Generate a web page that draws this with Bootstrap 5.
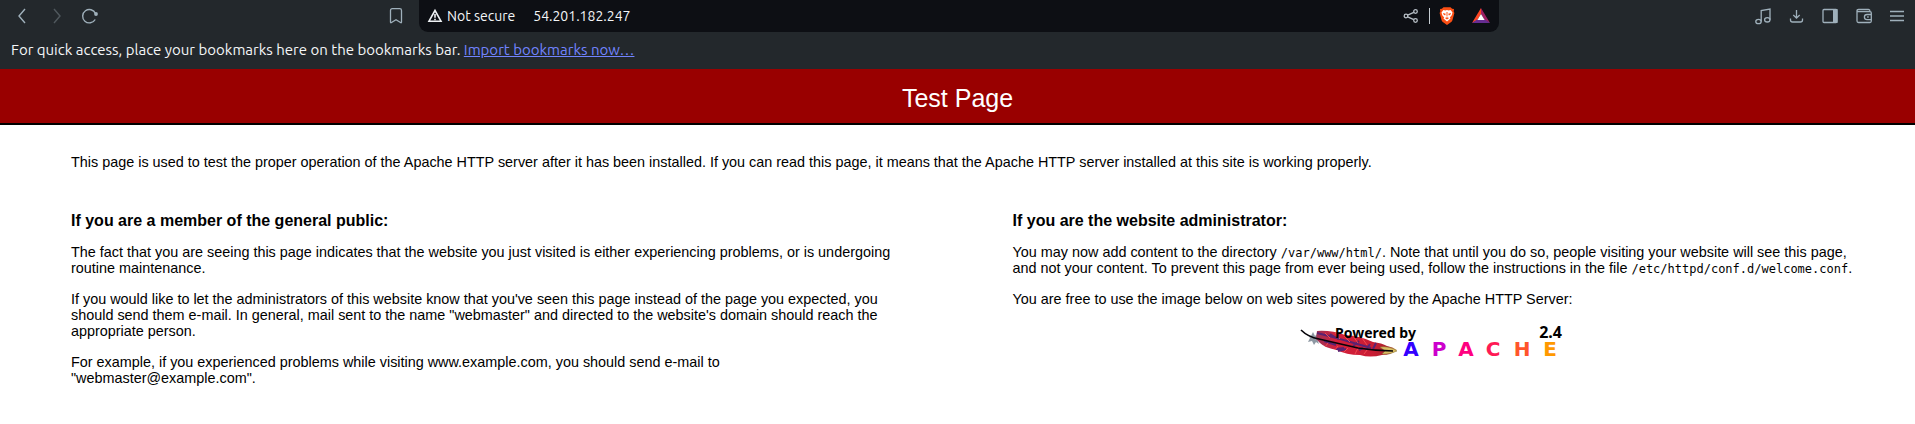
<!DOCTYPE html>
<html lang="en">
<head>
<meta charset="utf-8">
<meta name="viewport" content="width=device-width, initial-scale=1">
<title>Apache HTTP Server Test Page</title>
<link rel="stylesheet" href="https://cdn.jsdelivr.net/npm/bootstrap@5.3.0/dist/css/bootstrap.min.css">
<style>
  body { font-family: "Liberation Sans", Arial, sans-serif; font-size: 0.9rem; line-height: 16px; color: #000; background: #fff; }
  .browser-ui { background: #23282c; color: #f4f6f8; font-family: Ubuntu, "Noto Sans", sans-serif; font-size: 14px; }
  .toolbar { display: grid; grid-template-columns: 419px minmax(0, 1080px) 1fr; height: 32px; }
  .tool { width: 18px; height: 18px; padding: 0; border: 0; background: none; color: #9fb0bb; line-height: 0; }
  .tool:disabled { color: #50585e; }
  .address { background: #0d0f14; border-radius: 0 0 9px 9px; padding: 0 9px 0 8px; }
  .address input { background: none; border: 0; color: inherit; padding: 0 0 0 2px; outline: 0; min-width: 0; }
  .divider { width: 1px; height: 16px; background: #c5ccd2; }
  .bookmarks { height: 37px; padding: 0 11px 2px; font-size: 15px; }
  .bookmarks a { color: #7284ff; }
  .banner { background: #900; color: #fff; border-bottom: 2px solid #000; padding: 14px 0 10px; }
  .banner h1 { font-size: 25px; line-height: 30px; }
  .page-body { padding: 29px 62px 20px 71px; }
  .page-body p { margin-bottom: 15px; }
  .intro { padding-bottom: 27px; }
  .halves { column-gap: 104px; }
  .visitors { width: 47%; }
  .admins { flex: 1 1 0; }
  .halves h2 { font-size: 16px; line-height: 18px; font-weight: 700; margin-bottom: 14px; }
  .halves code { font-family: "DejaVu Sans Mono", monospace; font-size: 12px; line-height: 12px; color: inherit; }
  .powered { overflow: visible; }
</style>
</head>
<body>
<header class="browser-ui">
  <div class="toolbar">
    <div class="d-flex align-items-center ps-2 pe-3">
      <div class="d-flex align-items-center gap-3 ms-1">
        <button class="tool" aria-label="Back"><svg width="18" height="18" fill="none" stroke="currentColor" stroke-width="1.4"><path d="M13 2 7 9l6 7"/></svg></button>
        <button class="tool" aria-label="Forward" disabled><svg width="18" height="18" fill="none" stroke="currentColor" stroke-width="1.4"><path d="m8 2 6 7-6 7"/></svg></button>
        <button class="tool" aria-label="Reload"><svg width="18" height="18" fill="none" stroke="currentColor" stroke-width="1.4"><path d="M15.200 12.500A6.700 6.700 0 1 1 15.500 6.500"/><circle cx="16" cy="7" r="1.900" fill="currentColor" stroke="none"/></svg></button>
      </div>
      <button class="tool ms-auto" aria-label="Bookmark this page"><svg width="18" height="18" fill="none" stroke="currentColor" stroke-width="1.300"><path d="M5.500 3.500Q5.500 1.700 7.300 1.700h7.400q1.800 0 1.800 1.800V15q0 1.200-1 .5L11 12.700l-4.500 2.800q-1 .7-1-.5z"/></svg></button>
    </div>
    <div class="address d-flex align-items-center">
      <svg width="16" height="16" fill="none" stroke="#eef1f4" stroke-width="1.600"><path d="M8 2.500 14 13.200H2z"/><path d="M8 6v3.800M8 10.700v1.500"/></svg>
      <span class="ms-1">Not secure</span>
      <input class="flex-grow-1 ms-3" aria-label="Address" value="54.201.182.247">
      <button class="tool" aria-label="Share"><svg width="18" height="18" fill="none" stroke="#b6bec5" stroke-width="1.300"><circle cx="3" cy="9" r="1.800"/><circle cx="12.500" cy="4.500" r="1.800"/><circle cx="12.500" cy="13.500" r="1.800"/><path d="m4.700 8.200 6.100-2.900M4.700 9.800l6.100 2.900"/></svg></button>
      <span class="divider ms-2"></span>
      <button class="tool ms-2 me-3" aria-label="Brave Shields"><svg width="18" height="18" viewBox="0 0 18 18"><path fill="#fb4f14" d="M5.500.200h7l1.600 1.600 1.900.3-.3 2.300.7 1.600-2 7.200q-.3 1-1.200 1.700L9 18l-4.200-3.100q-.9-.7-1.200-1.700l-2-7.200.7-1.600L2 2.100l1.900-.3z"/><path fill="#fff" d="m5.400 3.100 2 .4L9 3.100l1.600.4 2-.4 1.900 2.500-.8 2.600-1.900 2.200.7 1.200L9 14.400l-3.500-2.800.7-1.200-1.900-2.200-.8-2.600z"/><path fill="#fb4f14" d="m5 6 2.800.7-.7 1.800-1.600-.9zm8 0-2.800.7.7 1.800 1.600-.9zM8.500 5h1l-.1 4.500h-.8zM6.900 11.100 9 10.200l2.100.9L9 12.500z"/></svg></button>
      <button class="tool" aria-label="Brave Rewards"><svg width="18" height="18"><path fill="#ff4724" d="M9 1v6l-3.800 6.200L0 16z"/><path fill="#9e1f63" d="M9 1l9 15-5.200-2.800L9 7z"/><path fill="#662d91" d="M0 16h18l-5-3.500H5z"/><path fill="#fff" d="m9 7 3.700 6H5.300z"/></svg></button>
    </div>
    <div class="d-flex align-items-center justify-content-end gap-3 pe-2">
      <button class="tool" aria-label="Playlist"><svg width="18" height="18" fill="none" stroke="currentColor" stroke-width="1.300"><ellipse cx="5.500" cy="14.500" rx="2.700" ry="2.200"/><ellipse cx="14.300" cy="12.800" rx="2.700" ry="2.200"/><path d="M8.200 14.500V3.500L17 2v10.800"/></svg></button>
      <button class="tool" aria-label="Downloads"><svg width="18" height="18" fill="none" stroke="currentColor" stroke-width="1.300"><path d="M9.500 3v8M6.300 8l3.200 3.200L12.700 8M3.500 11.500V13q0 2 2 2h8q2 0 2-2v-1.500"/></svg></button>
      <button class="tool" aria-label="Sidebar"><svg width="18" height="18"><rect x="2" y="2.500" width="14" height="13" rx="1" fill="none" stroke="currentColor" stroke-width="1.300"/><path fill="currentColor" d="M12 2h4.500v14H12z"/></svg></button>
      <button class="tool" aria-label="Wallet"><svg width="18" height="18" fill="none" stroke="currentColor" stroke-width="1.300"><path d="M2 4v10q0 1.500 1.500 1.500H15q1.300 0 1.300-1.500V6q0-1.300-1.300-1.300H3.300Q2 4.700 2 3.700 2 2.500 3.500 2.500h10q1.500 0 1.500 2M16.300 7.500H12a2.600 2.600 0 0 0 0 5.200h4.300M12.200 10h1.500"/></svg></button>
      <button class="tool" aria-label="Menu"><svg width="18" height="18" fill="none" stroke="currentColor" stroke-width="1.300"><path d="M1 4.500h14M1 9h14M1 13.500h14"/></svg></button>
    </div>
  </div>
  <div class="bookmarks d-flex align-items-center">
    <span>For quick access, place your bookmarks here on the bookmarks bar. <a href="#">Import bookmarks now…</a></span>
  </div>
</header>
<div class="banner text-center">
  <h1 class="fw-normal m-0">Test Page</h1>
</div>
<main class="page-body">
  <div class="intro"><p>This page is used to test the proper operation of the Apache HTTP server after it has been installed. If you can read this page, it means that the Apache HTTP server installed at this site is working properly.</p></div>
  <div class="halves d-flex">
    <section class="visitors pe-2">
      <h2>If you are a member of the general public:</h2>
      <p>The fact that you are seeing this page indicates that the website you just visited is either experiencing problems, or is undergoing routine maintenance.</p>
      <p>If you would like to let the administrators of this website know that you've seen this page instead of the page you expected, you should send them e-mail. In general, mail sent to the name "webmaster" and directed to the website's domain should reach the appropriate person.</p>
      <p>For example, if you experienced problems while visiting www.example.com, you should send e-mail to "webmaster@example.com".</p>
    </section>
    <section class="admins">
      <h2>If you are the website administrator:</h2>
      <p>You may now add content to the directory <code>/var/www/html/</code>. Note that until you do so, people visiting your website will see this page, and not your content. To prevent this page from ever being used, follow the instructions in the file <code>/etc/httpd/conf.d/welcome.conf</code>.</p>
      <p>You are free to use the image below on web sites powered by the Apache HTTP Server:</p>
      <div class="text-center pe-1">
        <a href="#" aria-label="Powered by Apache 2.4">
        <svg class="powered" width="264" height="42" viewBox="0 0 264 42">
          <defs>
            <linearGradient id="vane" x1="0" x2="1"><stop offset="0" stop-color="#9c3355"/><stop offset=".25" stop-color="#d3203c"/><stop offset=".7" stop-color="#c91c34"/><stop offset=".9" stop-color="#a5242d"/><stop offset="1" stop-color="#d0b35a"/></linearGradient>
          </defs>
          <g transform="translate(1 8)">
            <path fill="#8d98a3" d="m8 5 3 1 2-4 2 4 3-3-1 6 2 5-3-2-2 3-2-4-4 1 2-4z"/>
            <path fill="url(#vane)" d="M17 1q14-1 28 4 16 1 28 7 9 1 14 4 6 1 10 4-6 5-15 5-12 3-22 0-14 0-23-5-12-2-17-7l-4-4z"/>
            <path fill="none" stroke="#5b2272" stroke-width="2" d="M17 3q20 5 30 8t24 7M30 4l8 5m-2 6-12-4m22 8-8 2m21-10-6 5m17-2-4 6m10-7-3 6m-37 0 8-1m15 2 4-2"/>
            <path fill="none" stroke="#f04a50" d="m25 3 5 5m5-5 5 6m4-3 6 6m3-6 5 7m4-5 5 7M28 13l-3 4m13-1-3 4m13-2-4 4m14-4-3 6m12-4-3 4"/>
            <path fill="#d9bd63" stroke="#857033" stroke-width=".5" d="M80 17q10-1 17 4-7 4-15 3l3-3z"/>
            <path fill="none" stroke="#050308" stroke-width="1.600" d="M1 0q7 7 18 9 22 5 39 9 18 3 35 3"/>
          </g>
          <g font-family="'Noto Sans', sans-serif" font-weight="700"><text x="36" y="16" font-size="14">Powered by</text><text x="263" y="16" font-size="16" text-anchor="end">2.4</text></g>
          <g font-family="'DejaVu Sans', sans-serif" font-weight="700" font-size="20" text-anchor="middle">
            <text x="112" y="34" fill="#3300ff">A</text><text x="140" y="34" fill="#cc00cc">P</text><text x="167" y="34" fill="#ff0080">A</text><text x="194" y="34" fill="#ff1a55">C</text><text x="223" y="34" fill="#ff552b">H</text><text x="251" y="34" fill="#ff9900">E</text>
          </g>
        </svg>
        </a>
      </div>
    </section>
  </div>
</main>
<script src="https://cdn.jsdelivr.net/npm/bootstrap@5.3.0/dist/js/bootstrap.bundle.min.js"></script>
</body>
</html>
